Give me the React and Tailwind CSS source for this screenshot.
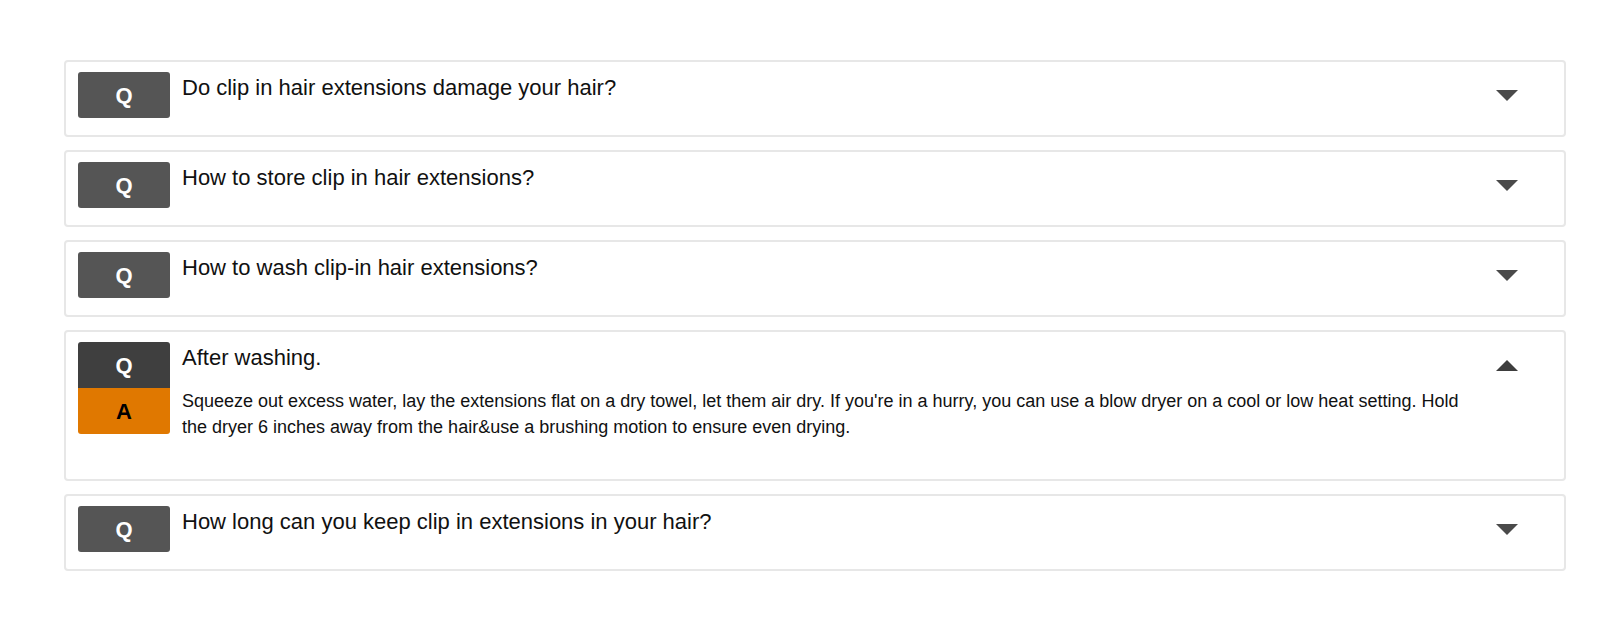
const FAQS = [
  { q: "Do clip in hair extensions damage your hair?" },
  { q: "How to store clip in hair extensions?" },
  { q: "How to wash clip-in hair extensions?" },
  {
    q: "After washing.",
    a: "Squeeze out excess water, lay the extensions flat on a dry towel, let them air dry. If you're in a hurry, you can use a blow dryer on a cool or low heat setting. Hold the dryer 6 inches away from the hair&use a brushing motion to ensure even drying.",
    open: true,
  },
  { q: "How long can you keep clip in extensions in your hair?" },
];

function Caret({ up }) {
  return (
    <svg width="22" height="11" viewBox="0 0 22 11" className="mt-[18px] shrink-0">
      <polygon points={up ? "11,0 22,11 0,11" : "0,0 22,0 11,11"} fill={up ? "#3d3d3d" : "#4a4a4a"} />
    </svg>
  );
}

function FaqItem({ item }) {
  return (
    <div className="flex rounded-[4px] border-2 border-[#e7e7e7] bg-white pl-3 pr-[46px] pt-[10px] pb-[17px]">
      <div className="flex-1 pr-3">
        <div className="flex gap-3">
          <span
            className={`flex h-[46px] w-[92px] shrink-0 items-center justify-center text-[22px] font-bold text-white ${
              item.open ? "rounded-t-[3px] bg-[#3f3f3f]" : "rounded-[3px] bg-[#555555]"
            }`}
          >
            Q
          </span>
          <p className="mt-[2px] text-[22px] leading-[28px] text-[#111]">{item.q}</p>
        </div>
        {item.open && (
          <div className="mb-[22px] flex gap-3">
            <span className="flex h-[46px] w-[92px] shrink-0 items-center justify-center rounded-b-[3px] bg-[#e07800] text-[22px] font-bold text-black">
              A
            </span>
            <p className="text-[18px] leading-[26px] text-[#111]">{item.a}</p>
          </div>
        )}
      </div>
      <Caret up={item.open} />
    </div>
  );
}

export default function App() {
  return (
    <div className="min-h-screen bg-white pl-[64px] pt-[60px]" style={{ fontFamily: '"Liberation Sans", Arial, sans-serif' }}>
      <div className="flex w-[1502px] flex-col gap-[13px]">
        {FAQS.map((item) => (
          <FaqItem key={item.q} item={item} />
        ))}
      </div>
    </div>
  );
}
